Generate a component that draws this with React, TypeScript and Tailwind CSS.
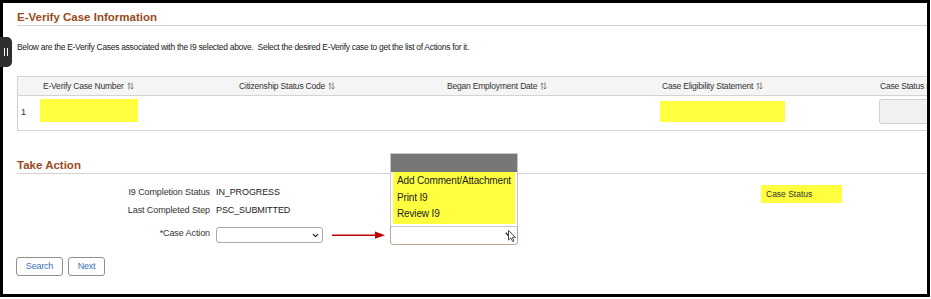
import { ChevronDown } from "lucide-react";

function SortIcon() {
  return (
    <svg width="7" height="8" viewBox="0 0 7 8" className="ml-[3px] inline-block shrink-0" aria-hidden="true">
      <path
        d="M2 7.5V1M0.6 2.4L2 1l1.4 1.4M5 0.5V7M3.6 5.6L5 7l1.4-1.4"
        fill="none"
        stroke="#777"
        strokeWidth="0.9"
      />
    </svg>
  );
}

function SectionTitle({ children }: { children: string }) {
  return (
    <div className="ml-[14px] border-b border-[#d2d2d2]">
      <h2 className="text-[11.5px] leading-[16px] font-bold text-[#9a4a1c]">{children}</h2>
    </div>
  );
}

function Cursor() {
  return (
    <svg width="8" height="12" viewBox="0 0 8 12" className="absolute right-[1px] top-[4px]" aria-hidden="true">
      <path
        d="M0.5 0.5V10L2.9 7.8L4.6 11.5L6 10.9L4.4 7.3H7.5Z"
        fill="#fff"
        stroke="#222"
        strokeWidth="0.8"
        strokeLinejoin="round"
      />
    </svg>
  );
}

export default function App() {
  return (
    <div className="relative h-[299px] w-[931px] bg-white font-['Liberation_Sans',Arial,sans-serif] text-[#333]">
      <div className="h-[297px] w-[930px] overflow-hidden border-[3px] border-black bg-white">
        <div className="relative">
          <div className="pt-[6px]">
            <SectionTitle>E-Verify Case Information</SectionTitle>
          </div>

          <p className="ml-[14px] mt-[15px] text-[8.5px] leading-[12px] tracking-[-0.3px] text-[#222]">
            Below are the E-Verify Cases associated with the I9 selected above.&nbsp; Select the desired E-Verify
            case to get the list of Actions for it.
          </p>

          {/* cases grid */}
          <div className="ml-[14px] mt-[23px] w-[1000px] border border-[#d3d3d3]">
            <div className="grid h-[19px] grid-cols-[22px_199px_208px_215px_218px_1fr] items-center border-b border-[#d3d3d3] bg-[#f5f5f5] text-[8.5px] tracking-[-0.2px] text-[#333]">
              <div />
              <div className="flex items-center pl-[3px]">
                E-Verify Case Number <SortIcon />
              </div>
              <div className="flex items-center">
                Citizenship Status Code <SortIcon />
              </div>
              <div className="flex items-center">
                Began Employment Date <SortIcon />
              </div>
              <div className="flex items-center">
                Case Eligibility Statement <SortIcon />
              </div>
              <div className="flex items-center whitespace-nowrap">
                Case Status Date <SortIcon />
              </div>
            </div>
            <div className="grid h-[34px] grid-cols-[22px_199px_208px_215px_218px_1fr] text-[9px]">
              <div className="flex items-center pl-[3px]">1</div>
              <div className="pt-[3px]">
                <div className="h-[23px] w-[98px] bg-[#ffff40]" />
              </div>
              <div />
              <div />
              <div className="pt-[5px]">
                <div className="ml-[-2px] h-[21px] w-[125px] bg-[#ffff40]" />
              </div>
              <div className="pt-[3px]">
                <div className="ml-[-1px] h-[25px] w-[100px] rounded-[3px] border border-[#cfcfcf] bg-[#f1f1f1]" />
              </div>
            </div>
          </div>

          <div className="mt-[26px]">
            <SectionTitle>Take Action</SectionTitle>
          </div>

          <div className="mt-[10px] flex">
            <div className="ml-[14px] w-[730px] text-[9px] tracking-[-0.1px]">
              <div className="grid h-[18px] grid-cols-[193px_1fr] items-center gap-x-[6px]">
                <span className="text-right text-[#333]">I9 Completion Status</span>
                <span className="text-[#222]">IN_PROGRESS</span>
              </div>
              <div className="grid h-[18px] grid-cols-[193px_1fr] items-center gap-x-[6px]">
                <span className="text-right text-[#333]">Last Completed Step</span>
                <span className="text-[#222]">PSC_SUBMITTED</span>
              </div>
              <div className="mt-[5px] grid h-[20px] grid-cols-[193px_1fr] items-center gap-x-[6px]">
                <span className="mb-[3px] text-right text-[#333]">*Case Action</span>
                <div className="flex items-center">
                  <div className="flex h-[16px] w-[107px] items-center justify-end rounded-[3px] border border-[#a9a9a9] bg-white pr-[2px]">
                    <ChevronDown size={9} strokeWidth={3.5} color="#222" />
                  </div>
                  <svg width="53" height="8" viewBox="0 0 53 8" className="ml-[9px]" aria-hidden="true">
                    <path d="M0 4.3H44" stroke="#c00000" strokeWidth="1.6" />
                    <path d="M43 0.5L53 4.2L43 7.8Z" fill="#c00000" />
                  </svg>
                  <div className="relative ml-[5px] h-[20px] w-[128px] rounded-[3px] border border-[#bba895] bg-white">
                    <svg width="7" height="5" viewBox="0 0 7 5" className="absolute right-[5px] top-[6px]" aria-hidden="true">
                      <path d="M0.8 0.8L3.5 3.8L6.2 0.8" fill="none" stroke="#333" strokeWidth="1.4" />
                    </svg>
                    <Cursor />
                  </div>
                </div>
              </div>

              <div className="ml-[-1px] mt-[12px] flex gap-[5px] text-[9px] tracking-[-0.2px]">
                <button className="h-[19px] w-[47px] rounded-[3px] border border-[#8f8f8f] bg-white text-[#3a72b8]">
                  Search
                </button>
                <button className="h-[19px] w-[37px] rounded-[3px] border border-[#8f8f8f] bg-white text-[#3a72b8]">
                  Next
                </button>
              </div>
            </div>
            <div className="ml-[14px] mt-[1px] h-[18px] w-[81px] bg-[#ffff40] pl-[5px] text-[8.5px] leading-[18px] text-[#333]">
              Case Status
            </div>
          </div>

          {/* open dropdown list */}
          <div className="absolute left-[387px] top-[150px] w-[128px] border border-[#c8c8c8] bg-white">
            <div className="h-[18px] bg-[#777]" />
            <div className="mx-[2px] mb-[2px] whitespace-nowrap bg-[#ffff40] px-[4px] py-[1px] text-[10px] leading-[16.5px] tracking-[-0.15px] text-[#222]">
              <div>Add Comment/Attachment</div>
              <div>Print I9</div>
              <div>Review I9</div>
            </div>
          </div>
        </div>
      </div>

      {/* side handle */}
      <div className="absolute left-0 top-[37px] flex h-[30px] w-[12px] items-center justify-center rounded-r-[5px] bg-[#2f2f2f]">
        <div className="flex gap-[1.5px]">
          <div className="h-[8px] w-[1.5px] bg-white" />
          <div className="h-[8px] w-[1.5px] bg-white" />
        </div>
      </div>
    </div>
  );
}
